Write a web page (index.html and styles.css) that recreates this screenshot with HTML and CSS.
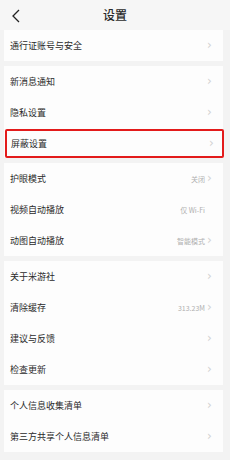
FILE: index.html
```html
<!DOCTYPE html>
<html>
<head>
<meta charset="utf-8">
<meta name="viewport" content="width=device-width">
<link rel="stylesheet" href="styles.css">
</head>
<body>
  <div class="top">
    <svg class="back" width="10" height="14" viewBox="0 0 10 14"><path d="M8 1 L2 7 L8 13" fill="none" stroke="#222" stroke-width="1.3"/></svg>
    <div class="title">设置</div>
  </div>

  <div class="card">
    <div class="row"><span class="name">通行证账号与安全</span><span class="arrow">›</span></div>
  </div>

  <div class="card">
    <div class="row"><span class="name">新消息通知</span><span class="arrow">›</span></div>
    <div class="row"><span class="name">隐私设置</span><span class="arrow">›</span></div>
    <div class="row mark"><span class="name">屏蔽设置</span><span class="arrow">›</span></div>
  </div>

  <div class="card">
    <div class="row"><span class="name">护眼模式</span><span class="val">关闭</span><span class="arrow">›</span></div>
    <div class="row"><span class="name">视频自动播放</span><span class="val">仅 Wi-Fi</span><span class="arrow none">›</span></div>
    <div class="row"><span class="name">动图自动播放</span><span class="val">智能模式</span><span class="arrow">›</span></div>
  </div>

  <div class="card">
    <div class="row"><span class="name">关于米游社</span><span class="arrow">›</span></div>
    <div class="row"><span class="name">清除缓存</span><span class="val">313.23M</span><span class="arrow">›</span></div>
    <div class="row"><span class="name">建议与反馈</span><span class="arrow">›</span></div>
    <div class="row"><span class="name">检查更新</span><span class="arrow">›</span></div>
  </div>

  <div class="card">
    <div class="row"><span class="name">个人信息收集清单</span><span class="arrow">›</span></div>
    <div class="row"><span class="name">第三方共享个人信息清单</span><span class="arrow">›</span></div>
  </div>
</body>
</html>
```

FILE: styles.css
```css
body {
    margin: 0;
    background: #f3f3f3;
    font-family: "Noto Sans CJK SC", "Noto Sans", sans-serif;
    color: #2a2a2a;
}
.top {
    height: 30px;
    display: flex;
    align-items: center;
    justify-content: center;
    position: relative;
    background: #f6f6f6;
}
.back {
    position: absolute;
    left: 11px;
    top: 9px;
}
.title {
    font-size: 12px;
    font-weight: 500;
    margin-top: -1px;
}
.card {
    background: #fdfdfd;
    margin: 0 7px 5px 4px;
}
.row {
    height: 31px;
    display: flex;
    align-items: center;
    padding: 0 12px 0 6px;
    box-sizing: border-box;
}
.name {
    flex: 1;
    font-size: 9px;
    margin-top: -1px;
}
.val {
    font-size: 7px;
    color: #b0b0b0;
    margin-right: 2px;
}
.arrow {
    font-family: "DejaVu Sans", sans-serif;
    font-size: 12px;
    color: #d2d2d2;
    width: 4px;
    line-height: 1;
    margin-top: -2px;
}
.arrow.none { visibility: hidden; }
.mark {
    border: 2px solid #e31b1b;
    border-radius: 2px;
    margin: 1px -1px 0 1px;
    padding-left: 4px;
    padding-right: 9px;
    height: 29px;
}
```
